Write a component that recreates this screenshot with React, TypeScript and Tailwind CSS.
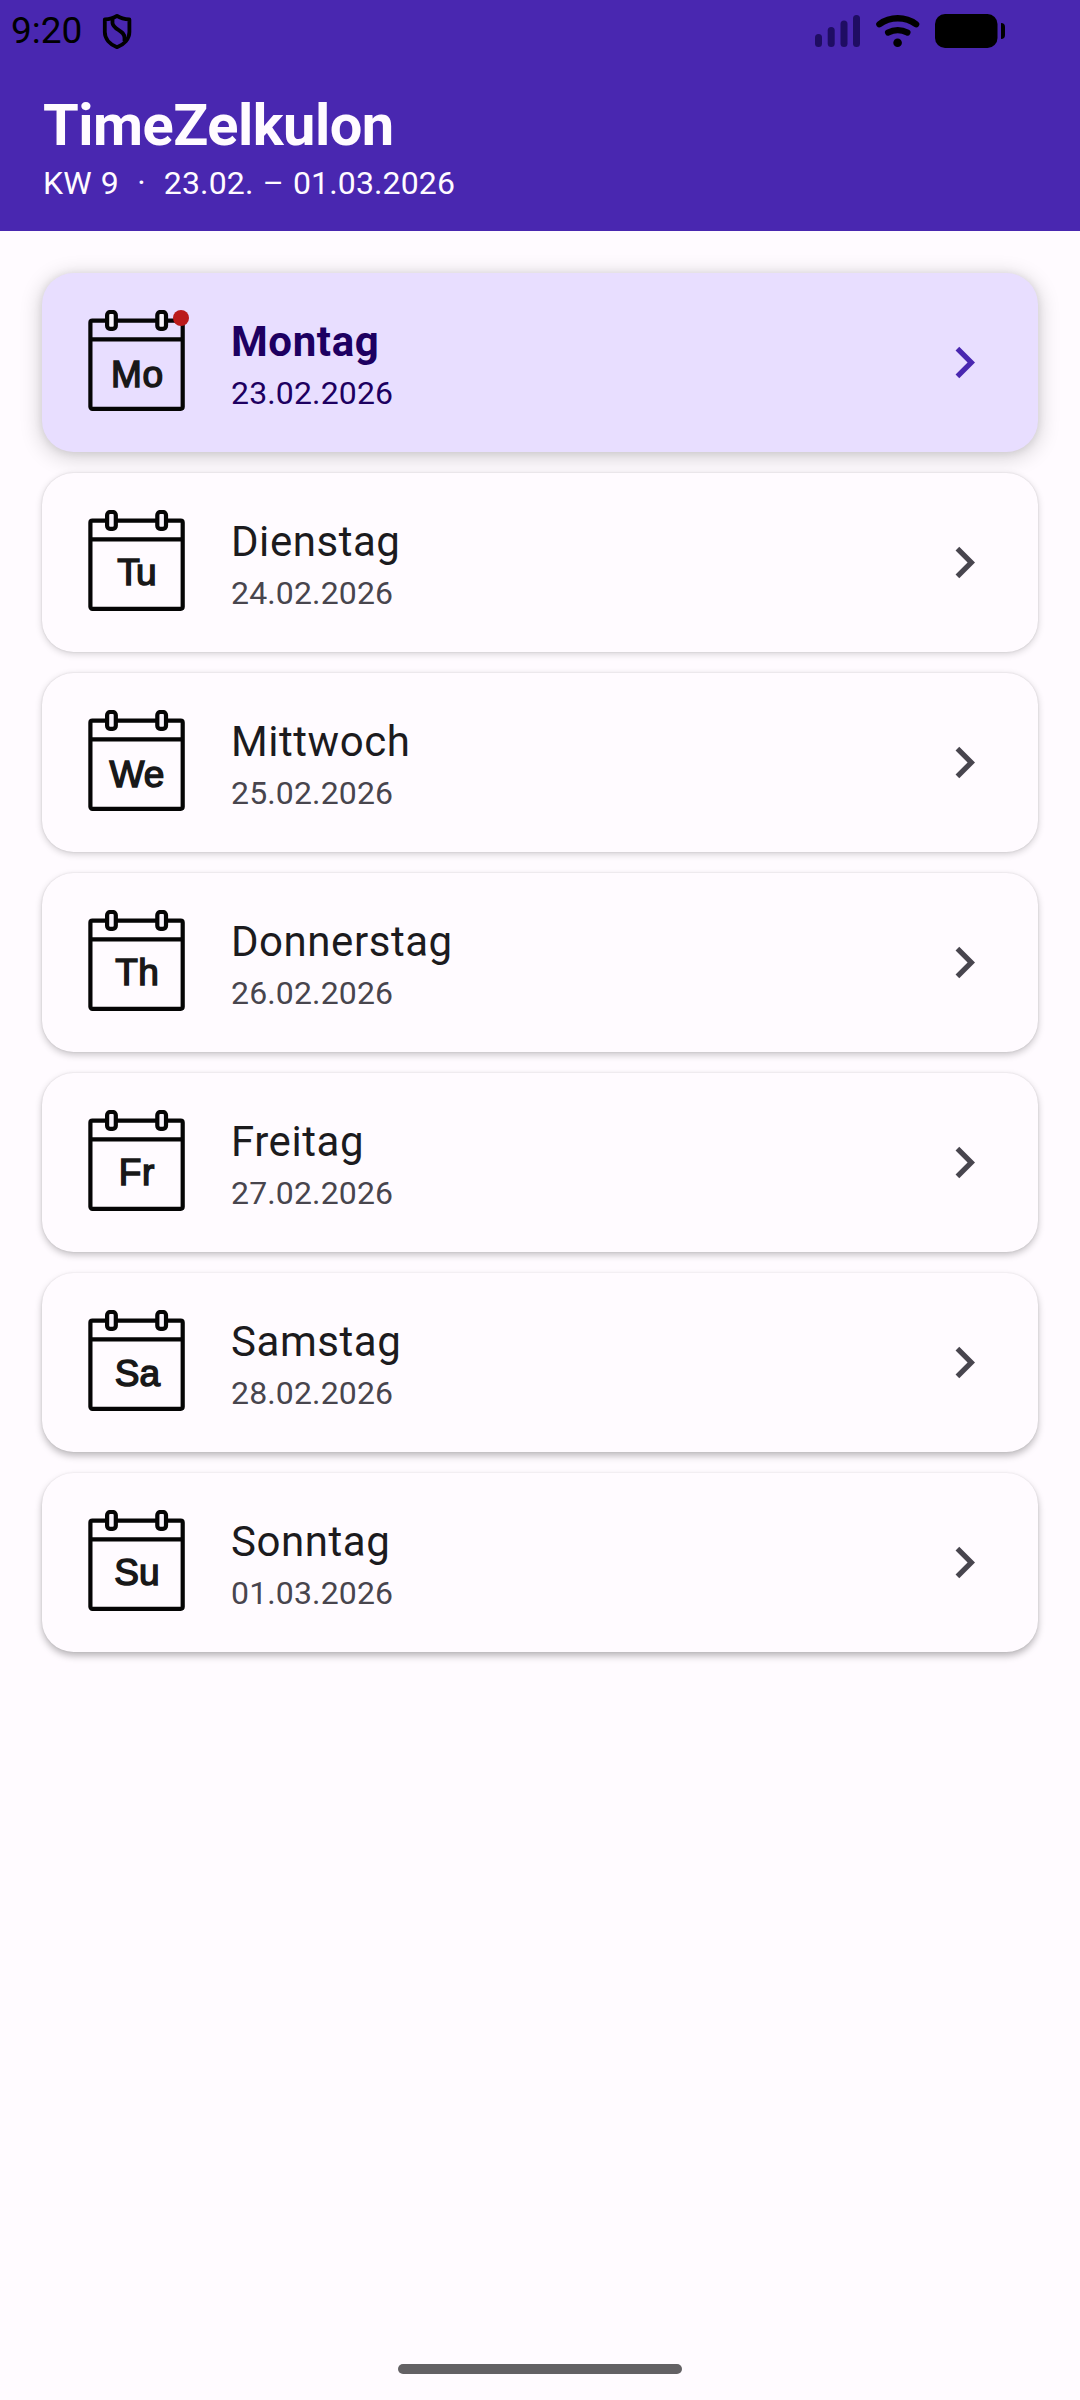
import clsx from 'clsx';

const days = [
  { short: 'Mo', name: 'Montag', date: '23.02.2026', today: true, shadow: 'shadow-[0_4px_20px_3px_rgba(0,0,0,0.15),0_1px_8px_rgba(0,0,0,0.1)]' },
  { short: 'Tu', name: 'Dienstag', date: '24.02.2026', shadow: 'shadow-[0_2px_7px_rgba(0,0,0,0.17),0_0_2px_rgba(0,0,0,0.13)]' },
  { short: 'We', name: 'Mittwoch', date: '25.02.2026', shadow: 'shadow-[0_2px_7px_rgba(0,0,0,0.19),0_0_2px_rgba(0,0,0,0.12)]' },
  { short: 'Th', name: 'Donnerstag', date: '26.02.2026', shadow: 'shadow-[0_3px_7px_rgba(0,0,0,0.21),0_0_2px_rgba(0,0,0,0.12)]' },
  { short: 'Fr', name: 'Freitag', date: '27.02.2026', shadow: 'shadow-[0_3px_7px_rgba(0,0,0,0.23),0_0_2px_rgba(0,0,0,0.11)]' },
  { short: 'Sa', name: 'Samstag', date: '28.02.2026', shadow: 'shadow-[0_4px_7px_rgba(0,0,0,0.25),0_0_2px_rgba(0,0,0,0.1)]' },
  { short: 'Su', name: 'Sonntag', date: '01.03.2026', shadow: 'shadow-[0_4px_7px_rgba(0,0,0,0.27),0_0_2px_rgba(0,0,0,0.09)]' },
];

// baseline and kerning of the two letters inside the calendar sheet
const labels: Record<string, { x: number; y: number; dx: number }> = {
  Mo: { x: 53, y: 76.5, dx: 0.5 },
  Tu: { x: 53, y: 75.3, dx: -2.5 },
  We: { x: 53, y: 76.5, dx: 0 },
  Th: { x: 53, y: 75.3, dx: 0.5 },
  Fr: { x: 52.5, y: 75.3, dx: 0.5 },
  Sa: { x: 53.5, y: 75.8, dx: 0 },
  Su: { x: 53, y: 75.3, dx: 0 },
};

function StatusBar() {
  return (
    <div className="flex h-[63px] items-start text-black">
      <span className="ml-[11px] mt-[9px] w-[70px] text-[37px] leading-[43px]">9:20</span>
      <svg className="ml-[20px] mt-[13px]" width="32" height="37" viewBox="0 0 32 37" fill="none" stroke="currentColor" strokeWidth="3.8" strokeLinejoin="round">
        <path d="M16 2.9C12 5.6 7.8 6.3 3.8 6.4V19C3.8 26 9 31.5 16 34.2C23 31.5 28.4 26 28.4 19V6.4C24.2 6.3 20 5.6 16 2.9Z" />
        <path d="M11.5 5V10C12 17 24 17 23.5 25V28" />
      </svg>

      <div className="ml-auto mr-[75px] flex items-start">
        <svg className="mt-[14px]" width="46" height="34" viewBox="0 0 46 34" fill="#1f0d63">
          <rect x="0" y="20" width="7" height="13" rx="3.5" />
          <rect x="12.7" y="13" width="7" height="20" rx="3.5" />
          <rect x="25.5" y="6.5" width="7" height="26.5" rx="3.5" />
          <rect x="38" y="1" width="7" height="32" rx="3.5" />
        </svg>
        <svg className="ml-[15px] mt-[14px]" width="44" height="34" viewBox="0 0 44 34" fill="none" stroke="currentColor" strokeWidth="6.4" strokeLinecap="round">
          <path d="M3.4 10.2C14 2.2 29.5 2.2 40.1 10.2" />
          <path d="M12.2 18.5C18 15.4 25.5 15.4 31.3 18.5" />
          <circle cx="21.6" cy="28.8" r="4.3" fill="currentColor" stroke="none" />
        </svg>
        <svg className="ml-[15px] mt-[14px]" width="70" height="34" viewBox="0 0 70 34" fill="currentColor">
          <rect x="0" y="0" width="62.5" height="34" rx="10" />
          <path d="M66 9C68.7 9 70 10.5 70 13V21C70 23.5 68.7 25 66 25Z" />
        </svg>
      </div>
    </div>
  );
}

function CalendarIcon({ label }: { label: string }) {
  const { x, y, dx } = labels[label];

  return (
    <svg width="105" height="105" viewBox="0 0 105 105" fill="none" stroke="#050505" strokeWidth="4.2">
      <rect x="6.4" y="10.7" width="92.3" height="88.1" rx="2" />
      <path d="M6 29.4H99" />
      <rect x="23.1" y="2" width="8.7" height="16.8" rx="3" fill="#f8f4fc" />
      <rect x="73.3" y="2" width="8.7" height="16.8" rx="3" fill="#f8f4fc" />
      <text
        x={x}
        y={y}
        textAnchor="middle"
        className="font-['Liberation_Sans',Arial,sans-serif] text-[37px]"
        fill="#181818"
        stroke="#181818"
        strokeWidth="1.5"
      >
        {label[0]}
        <tspan dx={dx}>{label[1]}</tspan>
      </text>
    </svg>
  );
}

function DayCard({ day }: { day: (typeof days)[number] }) {
  return (
    <li className={clsx('flex h-[179px] items-center rounded-[31.5px] px-[42px]', day.today ? 'bg-[#e8deff]' : 'bg-[#fffbff]', day.shadow)}>
      <div className="relative">
        <CalendarIcon label={day.short} />
        {day.today && <span className="absolute right-0 top-0 size-4 rounded-full bg-[#ba1a1a]" />}
      </div>

      <div className="ml-[42px] flex-1">
        <div className={clsx('text-[42px] leading-[63px]', day.today ? 'font-bold tracking-[0.6px] text-[#1d0061]' : 'tracking-[0.55px] text-[#1c1b1e]')}>
          {day.name}
        </div>
        <div className={clsx('mb-[2px] text-[32px] leading-[40px] tracking-[0.15px]', day.today ? 'text-[#1d0061]' : 'text-[#48454e]')}>
          {day.date}
        </div>
      </div>

      <svg width="63" height="63" viewBox="0 0 24 24" fill={day.today ? '#4927b0' : '#48454e'}>
        <path d="M10 6L8.59 7.41 13.17 12l-4.58 4.59L10 18l6-6z" />
      </svg>
    </li>
  );
}

export default function App() {
  return (
    <div className="flex h-[2400px] w-[1080px] flex-col bg-[#fffbff] font-['Roboto',sans-serif]">
      <header className="h-[231px] bg-[#4927b0]">
        <StatusBar />
        <div className="px-[43px] pt-[26px] text-[#fffbff]">
          <h1 className="text-[57.75px] leading-[73.5px] font-bold tracking-[-0.5px]">TimeZelkulon</h1>
          <p className="text-[32px] leading-[40px] tracking-[0.15px] [word-spacing:1px] whitespace-pre">KW 9  ·  23.02. – 01.03.2026</p>
        </div>
      </header>

      <ul className="flex flex-col gap-[21px] px-[42px] pt-[42px]">
        {days.map((day) => (
          <DayCard key={day.short} day={day} />
        ))}
      </ul>

      <div className="mx-auto mt-auto mb-[26px] h-[10px] w-[284px] rounded-full bg-[#636164]" />
    </div>
  );
}
